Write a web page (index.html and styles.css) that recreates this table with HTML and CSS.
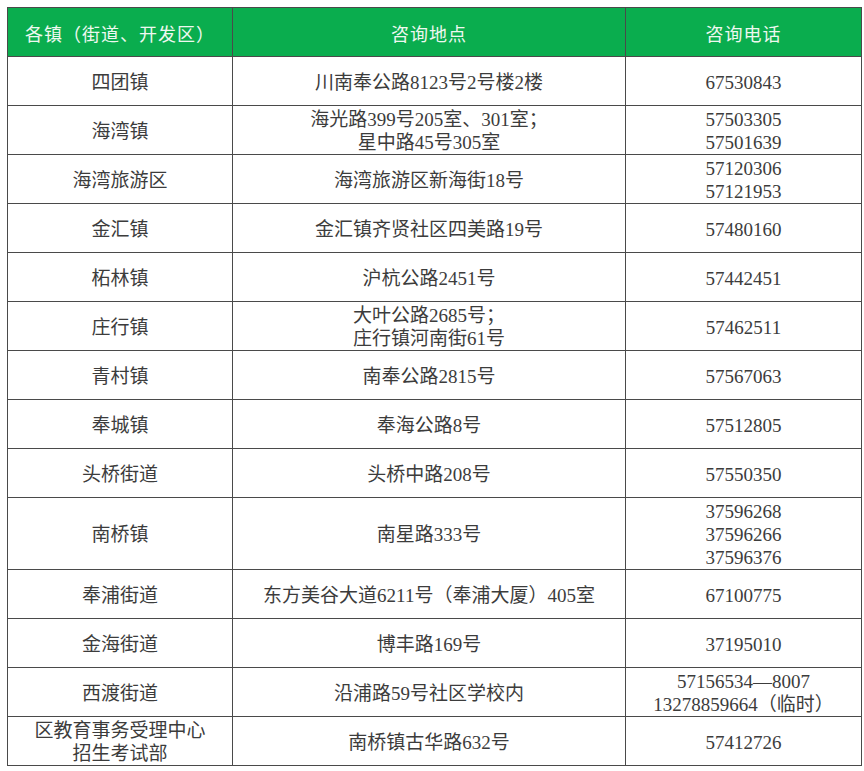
FILE: index.html
```html
<!DOCTYPE html>
<html lang="zh-CN">
<head>
<meta charset="utf-8">
<title>咨询</title>
<link rel="stylesheet" href="styles.css">
</head>
<body>
<table class="tbl">
  <colgroup>
    <col class="c1">
    <col class="c2">
    <col class="c3">
  </colgroup>
  <thead>
    <tr><th>各镇（街道、开发区）</th><th>咨询地点</th><th>咨询电话</th></tr>
  </thead>
  <tbody>
    <tr><td>四团镇</td><td>川南奉公路8123号2号楼2楼</td><td>67530843</td></tr>
    <tr><td>海湾镇</td><td>海光路399号205室、301室；<br>星中路45号305室</td><td>57503305<br>57501639</td></tr>
    <tr><td>海湾旅游区</td><td>海湾旅游区新海街18号</td><td>57120306<br>57121953</td></tr>
    <tr><td>金汇镇</td><td>金汇镇齐贤社区四美路19号</td><td>57480160</td></tr>
    <tr><td>柘林镇</td><td>沪杭公路2451号</td><td>57442451</td></tr>
    <tr><td>庄行镇</td><td>大叶公路2685号；<br>庄行镇河南街61号</td><td>57462511</td></tr>
    <tr><td>青村镇</td><td>南奉公路2815号</td><td>57567063</td></tr>
    <tr><td>奉城镇</td><td>奉海公路8号</td><td>57512805</td></tr>
    <tr><td>头桥街道</td><td>头桥中路208号</td><td>57550350</td></tr>
    <tr><td>南桥镇</td><td>南星路333号</td><td>37596268<br>37596266<br>37596376</td></tr>
    <tr><td>奉浦街道</td><td>东方美谷大道6211号（奉浦大厦）405室</td><td>67100775</td></tr>
    <tr><td>金海街道</td><td>博丰路169号</td><td>37195010</td></tr>
    <tr><td>西渡街道</td><td>沿浦路59号社区学校内</td><td>57156534—8007<br>13278859664（临时）</td></tr>
    <tr><td>区教育事务受理中心<br>招生考试部</td><td>南桥镇古华路632号</td><td>57412726</td></tr>
  </tbody>
</table>
</body>
</html>
```
FILE: styles.css
```css
html, body {
  margin: 0;
  padding: 0;
  background: #ffffff;
}
body {
  padding: 7px 0 0 7px;
}
.tbl {
  border-collapse: collapse;
  table-layout: fixed;
  width: 854px;
  font-family: "Liberation Serif", "Noto Sans CJK SC", serif;
  font-size: 19px;
  color: #3c3c3c;
}
.c1 { width: 225px; }
.c2 { width: 393px; }
.c3 { width: 236px; }
.tbl th,
.tbl td {
  border: 1px solid #4a4a4a;
  text-align: center;
  vertical-align: middle;
  padding: 2px 0 0;
  line-height: 23px;
  height: 46px;
}
.tbl th {
  background: #0aad4e;
  color: #eef8f0;
  font-family: "Noto Sans CJK SC", sans-serif;
  font-weight: normal;
  font-size: 18px;
  letter-spacing: 1px;
}
```
